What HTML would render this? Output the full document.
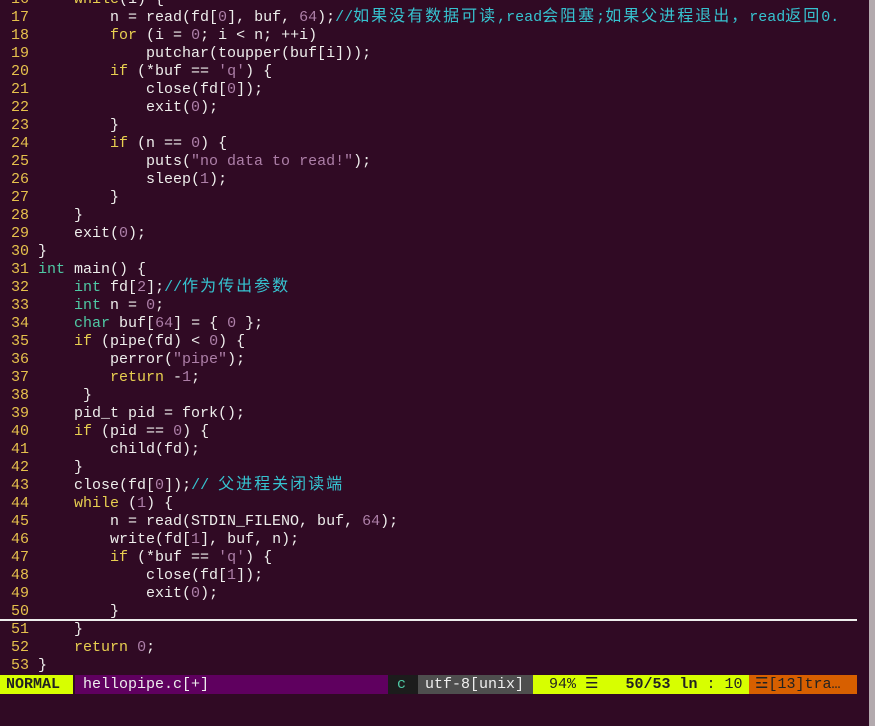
<!DOCTYPE html>
<html><head><meta charset="utf-8"><style>
html,body{margin:0;padding:0;width:875px;height:726px;overflow:hidden;background:#300a24;}
#ed{position:absolute;left:2px;top:-9px;margin:0;font-family:"Liberation Mono","Noto Sans CJK SC",monospace;font-size:15px;line-height:18px;color:#eeeeec;white-space:pre;}
.n{color:#e6c14c}.k{color:#e8cf50}.t{color:#4fc9a4}.v{color:#ad7fa8}.c{color:#36c3d0}
.z{font-family:"Noto Sans CJK SC",sans-serif;font-size:16px;letter-spacing:2px;line-height:1px}
#cur{position:absolute;left:0;top:619px;width:857px;height:2px;background:#eeeeec}
#sb{position:absolute;left:0;top:675px;height:19px;width:857px;font-family:"Liberation Mono",monospace;font-size:15px;line-height:19px;white-space:pre}
#sb div{position:absolute;top:0;height:19px}
#scroll{position:absolute;left:869px;top:0;width:6px;height:726px;background:#b3aaae}
</style></head><body>
<pre id="ed"><span class="n"> 16 </span>    <span class="k">while</span>(1) {
<span class="n"> 17 </span>        n = read(fd[<span class="v">0</span>], buf, <span class="v">64</span>);<span class="c">//<span class="z">如果没有数据可读</span>,read<span class="z">会阻塞</span>;<span class="z">如果父进程退出，</span>read<span class="z">返回</span>0.</span>
<span class="n"> 18 </span>        <span class="k">for</span> (i = <span class="v">0</span>; i &lt; n; ++i)
<span class="n"> 19 </span>            putchar(toupper(buf[i]));
<span class="n"> 20 </span>        <span class="k">if</span> (*buf == <span class="v">'q'</span>) {
<span class="n"> 21 </span>            close(fd[<span class="v">0</span>]);
<span class="n"> 22 </span>            exit(<span class="v">0</span>);
<span class="n"> 23 </span>        }
<span class="n"> 24 </span>        <span class="k">if</span> (n == <span class="v">0</span>) {
<span class="n"> 25 </span>            puts(<span class="v">"no data to read!"</span>);
<span class="n"> 26 </span>            sleep(<span class="v">1</span>);
<span class="n"> 27 </span>        }
<span class="n"> 28 </span>    }
<span class="n"> 29 </span>    exit(<span class="v">0</span>);
<span class="n"> 30 </span>}
<span class="n"> 31 </span><span class="t">int</span> main() {
<span class="n"> 32 </span>    <span class="t">int</span> fd[<span class="v">2</span>];<span class="c">//<span class="z">作为传出参数</span></span>
<span class="n"> 33 </span>    <span class="t">int</span> n = <span class="v">0</span>;
<span class="n"> 34 </span>    <span class="t">char</span> buf[<span class="v">64</span>] = { <span class="v">0</span> };
<span class="n"> 35 </span>    <span class="k">if</span> (pipe(fd) &lt; <span class="v">0</span>) {
<span class="n"> 36 </span>        perror(<span class="v">"pipe"</span>);
<span class="n"> 37 </span>        <span class="k">return</span> -<span class="v">1</span>;
<span class="n"> 38 </span>     }
<span class="n"> 39 </span>    pid_t pid = fork();
<span class="n"> 40 </span>    <span class="k">if</span> (pid == <span class="v">0</span>) {
<span class="n"> 41 </span>        child(fd);
<span class="n"> 42 </span>    }
<span class="n"> 43 </span>    close(fd[<span class="v">0</span>]);<span class="c">// <span class="z">父进程关闭读端</span></span>
<span class="n"> 44 </span>    <span class="k">while</span> (<span class="v">1</span>) {
<span class="n"> 45 </span>        n = read(STDIN_FILENO, buf, <span class="v">64</span>);
<span class="n"> 46 </span>        write(fd[<span class="v">1</span>], buf, n);
<span class="n"> 47 </span>        <span class="k">if</span> (*buf == <span class="v">'q'</span>) {
<span class="n"> 48 </span>            close(fd[<span class="v">1</span>]);
<span class="n"> 49 </span>            exit(<span class="v">0</span>);
<span class="n"> 50 </span>        }
<span class="n"> 51 </span>    }
<span class="n"> 52 </span>    <span class="k">return</span> <span class="v">0</span>;
<span class="n"> 53 </span>}</pre>
<div id="cur"></div>
<div id="sb">
<div style="left:0;width:73px;background:#d7ff00;color:#222;font-weight:bold;padding-left:6px;box-sizing:border-box">NORMAL</div>
<div style="left:75px;width:313px;background:#5f005f;color:#eee;padding-left:8px;box-sizing:border-box">hellopipe.c[+]</div>
<div style="left:388px;width:30px;background:#1c1c1c;color:#4fc9a4;padding-left:9px;box-sizing:border-box">c</div>
<div style="left:418px;width:115px;background:#4e4e4e;color:#eee;padding-left:7px;box-sizing:border-box">utf-8[unix]</div>
<div style="left:533px;width:216px;background:#d7ff00;color:#222;padding-left:16px;box-sizing:border-box">94% ☰   <b>50/53 ln</b> : 10</div>
<div style="left:749px;width:108px;background:#d75f00;color:#222;padding-left:6px;box-sizing:border-box">☲[13]tra…</div>
</div>
<div id="scroll"></div>
</body></html>
